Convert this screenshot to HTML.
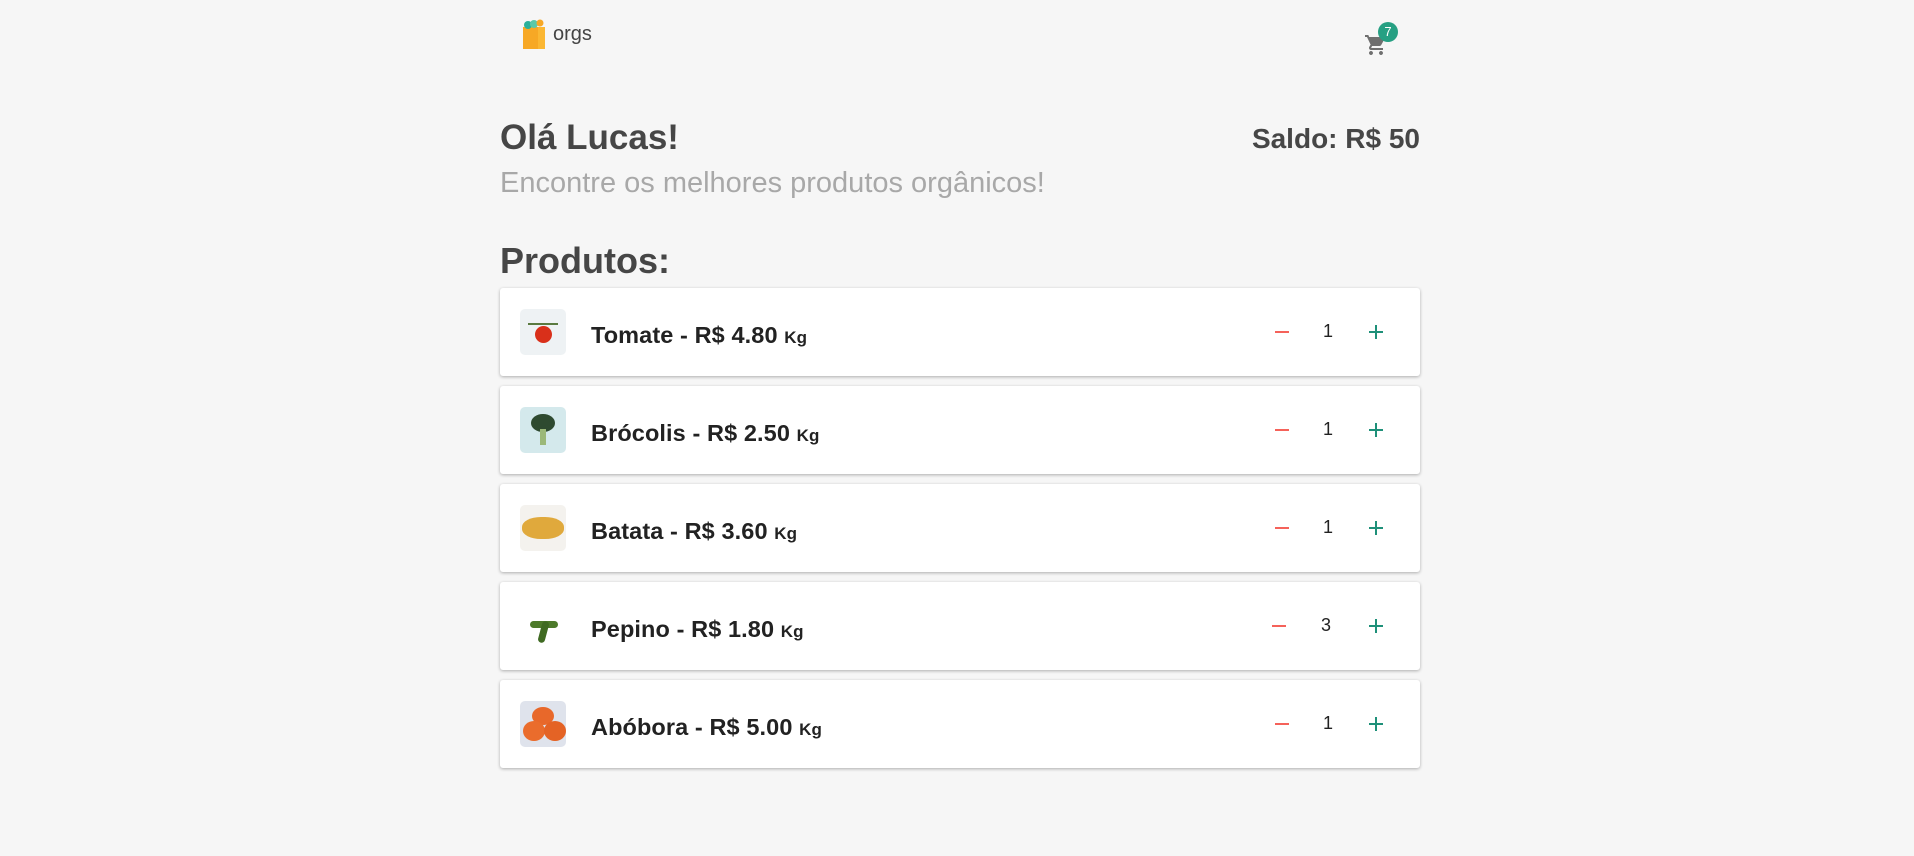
<!DOCTYPE html>
<html><head><meta charset="utf-8"><style>
*{margin:0;padding:0;box-sizing:border-box}
body{width:1914px;height:856px;background:#f6f6f6;font-family:"Liberation Sans",sans-serif;position:relative;overflow:hidden;color:#464646}
.abs{position:absolute}
.card{position:absolute;left:500px;width:920px;height:88px;background:#fff;box-shadow:0 1px 3px rgba(0,0,0,.3);border-radius:3px}
.img{position:absolute;left:20px;top:21px;width:46px;height:46px;border-radius:5px;overflow:hidden}
.name{position:absolute;left:91px;top:34px;font-size:23.5px;font-weight:bold;color:#222;letter-spacing:0.1px}
.name small{font-size:17px}
.minus{position:absolute;left:775px;top:43px;width:14px;height:2px;background:#f5625a}
.num{position:absolute;left:820px;top:33px;width:16px;text-align:center;font-size:18px;color:#222}
.plus{position:absolute;left:869px;top:37px;width:14px;height:14px}
.plus:before{content:"";position:absolute;left:0;top:6px;width:14px;height:2px;background:#1e9079}
.plus:after{content:"";position:absolute;left:6px;top:0;width:2px;height:14px;background:#1e9079}
</style></head><body>
<svg class="abs" style="left:522px;top:19px" width="24" height="30" viewBox="0 0 24 30">
<rect x="1" y="8" width="22" height="22" fill="#f7a825"/>
<rect x="16" y="8" width="7" height="22" fill="#fbb733"/>
<circle cx="6" cy="6" r="4" fill="#2bb09a"/><circle cx="12" cy="5" r="4" fill="#5ac8a8"/><circle cx="18" cy="4" r="3.5" fill="#f7a825"/>
</svg>
<div class="abs" style="left:553px;top:23px;font-size:20px;color:#444">orgs</div>
<svg class="abs" style="left:1364px;top:33px" width="24" height="24" viewBox="0 0 24 24"><path fill="#6f6f6f" d="M7 18c-1.1 0-2 .9-2 2s.9 2 2 2 2-.9 2-2-.9-2-2-2zM1 2v2h2l3.6 7.6-1.4 2.4c-.1.3-.2.6-.2 1 0 1.1.9 2 2 2h12v-2H7.4c-.1 0-.2-.1-.2-.2v-.1l.9-1.7h7.4c.8 0 1.4-.4 1.7-1l3.6-6.5c.1-.2.1-.3.1-.5 0-.6-.4-1-1-1H5.2l-.9-2H1zm16 16c-1.1 0-2 .9-2 2s.9 2 2 2 2-.9 2-2-.9-2-2-2z"/></svg>
<div class="abs" style="left:1378px;top:22px;width:20px;height:20px;border-radius:50%;background:#26a083;color:#fff;font-size:13px;text-align:center;line-height:20px">7</div>
<div class="abs" style="left:500px;top:118px;font-size:35px;font-weight:bold;color:#464646">Olá Lucas!</div>
<div class="abs" style="right:494px;top:123px;font-size:28px;font-weight:bold;color:#464646">Saldo: R$ 50</div>
<div class="abs" style="left:500px;top:167px;font-size:29px;color:#a8a8a8">Encontre os melhores produtos orgânicos!</div>
<div class="abs" style="left:500px;top:240px;font-size:36px;font-weight:bold;color:#464646">Produtos:</div>

<div class="card" style="top:288px"><div class="img" style="background:#eef2f4"><div style="position:absolute;left:15px;top:17px;width:17px;height:17px;border-radius:50%;background:#d9301a"></div><div style="position:absolute;left:8px;top:14px;width:30px;height:2px;background:#5a7a40"></div></div><div class="name">Tomate - R$ 4.80 <small>Kg</small></div><div class="minus"></div><div class="num">1</div><div class="plus"></div></div>
<div class="card" style="top:386px"><div class="img" style="background:#d4e9ec"><div style="position:absolute;left:11px;top:7px;width:24px;height:18px;border-radius:50%;background:#2e4a30"></div><div style="position:absolute;left:20px;top:22px;width:6px;height:16px;background:#9bb878"></div></div><div class="name">Brócolis - R$ 2.50 <small>Kg</small></div><div class="minus"></div><div class="num">1</div><div class="plus"></div></div>
<div class="card" style="top:484px"><div class="img" style="background:#f4f2ee"><div style="position:absolute;left:2px;top:12px;width:42px;height:22px;border-radius:45%;background:#e0a93c"></div></div><div class="name">Batata - R$ 3.60 <small>Kg</small></div><div class="minus"></div><div class="num">1</div><div class="plus"></div></div>
<div class="card" style="top:582px"><div class="img" style="background:#fff"><div style="position:absolute;left:10px;top:18px;width:28px;height:7px;border-radius:4px;background:#4d7a2a"></div><div style="position:absolute;left:20px;top:18px;width:7px;height:22px;border-radius:4px;background:#3f6a22;transform:rotate(15deg)"></div></div><div class="name">Pepino - R$ 1.80 <small>Kg</small></div><div class="minus" style="left:772px"></div><div class="num" style="left:818px">3</div><div class="plus"></div></div>
<div class="card" style="top:680px"><div class="img" style="background:#dfe3ec"><div style="position:absolute;left:12px;top:6px;width:22px;height:18px;border-radius:50%;background:#e8682a"></div><div style="position:absolute;left:3px;top:20px;width:22px;height:20px;border-radius:50%;background:#ea6c2c"></div><div style="position:absolute;left:24px;top:20px;width:22px;height:20px;border-radius:50%;background:#e46325"></div></div><div class="name">Abóbora - R$ 5.00 <small>Kg</small></div><div class="minus"></div><div class="num">1</div><div class="plus"></div></div>
</body></html>
